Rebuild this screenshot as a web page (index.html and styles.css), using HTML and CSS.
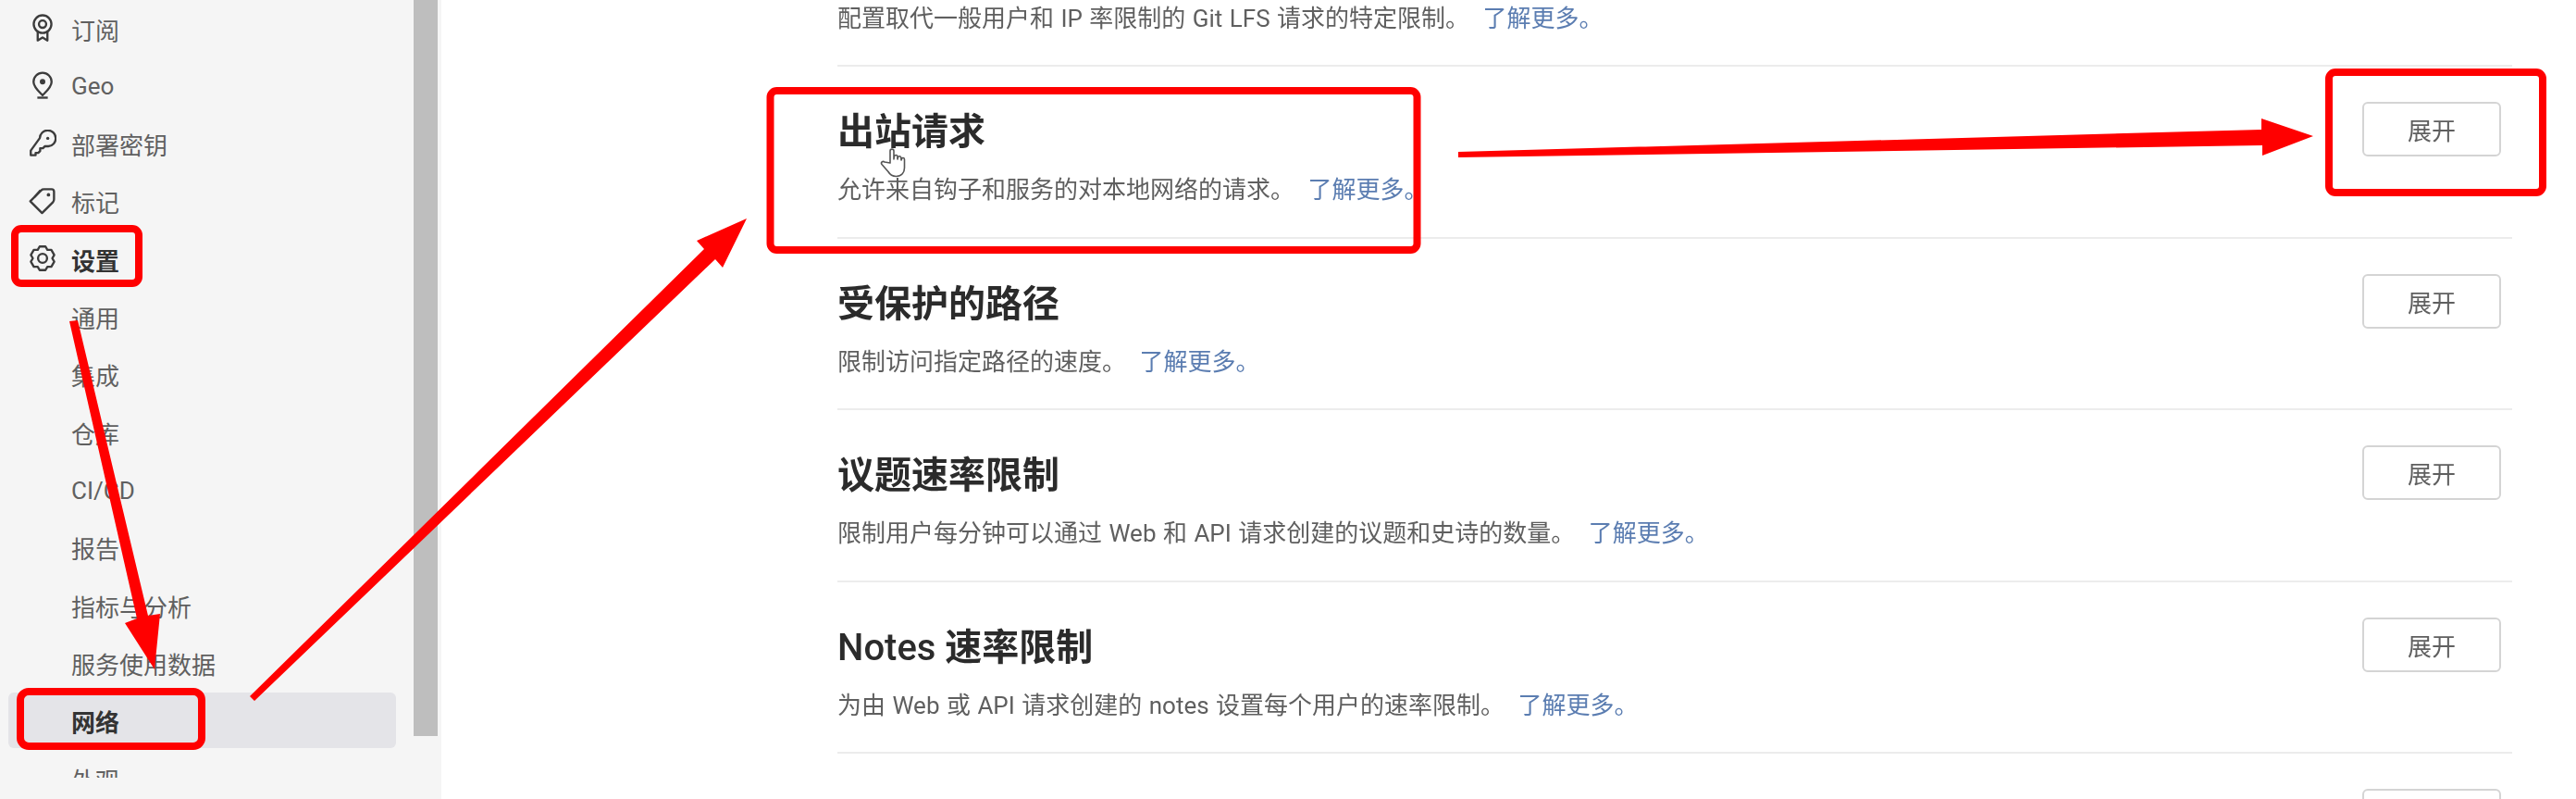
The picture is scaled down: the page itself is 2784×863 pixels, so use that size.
FILE: index.html
```html
<!DOCTYPE html>
<html lang="zh-CN">
<head>
<meta charset="utf-8">
<title>网络设置</title>
<link rel="stylesheet" href="styles.css">
</head>
<body>
<div class="page">
  <aside class="sidebar">
    <nav class="nav">
      <a class="nav-item">
        <svg class="icon" viewBox="0 0 16 16"><circle cx="8" cy="5.9" r="5.1"/><circle cx="8" cy="5.9" r="2.1"/><path d="M5.2 10.4v4.9L8 13.6l2.8 1.7v-4.9"/></svg>
        <span>订阅</span>
      </a>
      <a class="nav-item">
        <svg class="icon" viewBox="0 0 16 16"><path d="M8 .9a5.2 5.2 0 0 1 5.2 5.2c0 2.900-2.900 5.400-5.200 7.700-2.300-2.300-5.200-4.800-5.200-7.700A5.200 5.200 0 0 1 8 .9z"/><circle class="dot" cx="8" cy="6" r="1.6"/><path d="M5 15.200h6"/></svg>
        <span>Geo</span>
      </a>
      <a class="nav-item">
        <svg class="icon" viewBox="0 0 16 16"><path d="M6.400 4.900a4.600 4.600 0 1 1 4.900 4.700L9.400 9.500 8.200 10.700H6.600v1.600L5.500 13.400H4v1.300H1.200v-2.600z"/><circle class="dot" cx="11" cy="5" r=".9"/></svg>
        <span>部署密钥</span>
      </a>
      <a class="nav-item">
        <svg class="icon" viewBox="0 0 16 16"><path d="M.9 8.200 7.200 1.900c.5-.5 1-.6 1.600-.6h4.400c.8 0 1.400.6 1.400 1.400v4.400c0 .6-.2 1.200-.6 1.600L7.700 15z"/><path d="M3.400 5.700 6.800 1.900"/><circle class="dot" cx="11.400" cy="4.500" r="1"/></svg>
        <span>标记</span>
      </a>
      <a class="nav-item nav-strong">
        <svg class="icon" viewBox="0 0 16 16"><path d="M6.310 1.210H9.690L10.800 3.150 13.040 3.140 14.730 6.070 13.600 8 14.730 9.930 13.040 12.860 10.800 12.850 9.690 14.790H6.310L5.200 12.850 2.960 12.860 1.270 9.930 2.400 8 1.270 6.070 2.960 3.140 5.200 3.150z"/><circle cx="8" cy="8" r="2.600"/></svg>
        <span>设置</span>
      </a>
      <a class="nav-item nav-sub">通用</a>
      <a class="nav-item nav-sub">集成</a>
      <a class="nav-item nav-sub">仓库</a>
      <a class="nav-item nav-sub">CI/CD</a>
      <a class="nav-item nav-sub">报告</a>
      <a class="nav-item nav-sub">指标与分析</a>
      <a class="nav-item nav-sub">服务使用数据</a>
      <a class="nav-item nav-sub nav-strong nav-active">网络</a>
      <a class="nav-item nav-sub">外观</a>
    </nav>
    <div class="scrollbar"></div>
  </aside>

  <main class="content">
    <section class="row row-cut">
      <div class="row-text">
        <p class="desc">配置取代一般用户和 IP 率限制的 Git LFS 请求的特定限制。 <a class="more">了解更多。</a></p>
      </div>
    </section>
    <section class="row">
      <div class="row-text">
        <h2 class="title">出站请求</h2>
        <p class="desc">允许来自钩子和服务的对本地网络的请求。 <a class="more">了解更多。</a></p>
      </div>
      <button class="expand">展开</button>
    </section>
    <section class="row">
      <div class="row-text">
        <h2 class="title">受保护的路径</h2>
        <p class="desc">限制访问指定路径的速度。 <a class="more">了解更多。</a></p>
      </div>
      <button class="expand">展开</button>
    </section>
    <section class="row">
      <div class="row-text">
        <h2 class="title">议题速率限制</h2>
        <p class="desc">限制用户每分钟可以通过 Web 和 API 请求创建的议题和史诗的数量。 <a class="more">了解更多。</a></p>
      </div>
      <button class="expand">展开</button>
    </section>
    <section class="row">
      <div class="row-text">
        <h2 class="title"><span class="latin">Notes</span> 速率限制</h2>
        <p class="desc">为由 Web 或 API 请求创建的 notes 设置每个用户的速率限制。 <a class="more">了解更多。</a></p>
      </div>
      <button class="expand">展开</button>
    </section>
    <section class="row">
      <div class="row-text"></div>
      <button class="expand">展开</button>
    </section>
  </main>
</div>

<svg class="marks" viewBox="0 0 2784 863" aria-hidden="true">
  <rect class="box" x="16" y="247" width="134" height="59" rx="7"/>
  <rect class="box" x="22" y="747" width="196" height="59" rx="9"/>
  <rect class="box" x="832.500" y="98" width="699" height="172" rx="7"/>
  <rect class="box" x="2517" y="78" width="231" height="130" rx="7"/>
  <polygon class="arrow" points="75,347 84,346 160,665 173,663 167,723 135,673 148,668"/>
  <polygon class="arrow" points="807,236 781,289 773,280 275,757 270,752 761,269 753,260"/>
  <polygon class="arrow" points="1576,164 2444,140 2444,128 2500,147 2445,168 2445,157 1576,170"/>
  <path class="hand" d="M962 176V163c0-2.500 4-2.500 4 0v9l.4-3c.4-2 3.400-2 3.500 0l.1 3 .4-2c.5-1.800 3.300-1.500 3.400.4l.2 2.600.5-1.500c.6-1.500 3-1.200 3 .8v9c0 5-3 9.200-9 9.200-4 0-6.500-1.500-8.500-5l-7-8c-1.500-2 1-4 3-2.500z"/>
</svg>
</body>
</html>
```
FILE: styles.css
```css
* { box-sizing: border-box; }

html, body {
  margin: 0;
  padding: 0;
  height: 863px;
  overflow: hidden;
  background: #fff;
}

body {
  position: relative;
  font-family: Roboto, "Noto Sans CJK SC", sans-serif;
  color: #666;
}

.page {
  display: flex;
  height: 863px;
  overflow: hidden;
  filter: blur(0.55px);
}

/* sidebar */
.sidebar {
  flex: 0 0 477px;
  display: flex;
  align-items: flex-start;
  gap: 19px;
  height: 863px;
  padding-left: 9px;
  background: #f5f5f5;
}

.nav {
  flex: 0 0 419px;
  height: 840px;
  overflow: hidden;
}

.nav-item {
  display: flex;
  align-items: center;
  gap: 16px;
  height: 60px;
  margin-bottom: 2.33px;
  padding: 2px 0 0 22px;
  border-radius: 6px;
  font-size: 26px;
  color: #606060;
}

.nav-sub { padding-left: 68px; }

.nav-strong {
  font-weight: 700;
  color: #333;
}

.nav-active { background: #e4e4e8; }

.icon {
  flex: 0 0 30px;
  width: 30px;
  height: 30px;
  fill: none;
  stroke: #3c3c3c;
  stroke-width: 1.25;
  stroke-linejoin: round;
  margin-top: -2px;
}

.icon .dot {
  fill: #3c3c3c;
  stroke: none;
}

.scrollbar {
  flex: 0 0 26px;
  height: 795px;
  background: #bebebe;
}

/* settings list */
.content {
  flex: 1;
  min-width: 0;
  height: 863px;
  overflow: hidden;
  padding: 0 69px 0 428px;
}

.row {
  display: flex;
  justify-content: space-between;
  align-items: flex-start;
  padding: 38px 12px 31.5px 0;
  border-bottom: 2px solid #ececec;
}

.row-cut { padding: 1px 0 31px; }

.title {
  margin: 5px 0 15px;
  font-size: 40px;
  line-height: 56px;
  font-weight: 700;
  color: #2b2b2b;
}

.latin { font-weight: 500; }

.desc {
  margin: 0;
  font-size: 26px;
  line-height: 38px;
  word-spacing: 1px;
  color: #5f5f5f;
}

.more {
  margin-left: 7px;
  color: #5b7db1;
}

.expand {
  flex: 0 0 150px;
  height: 59px;
  padding: 0;
  border: 2px solid #d4d4d4;
  border-radius: 6px;
  background: #fff;
  font: inherit;
  font-size: 26px;
  color: #5f5f5f;
}

/* annotation layer over the screenshot */
.marks {
  position: absolute;
  left: 0;
  top: 0;
  width: 2784px;
  height: 863px;
  pointer-events: none;
}

.box {
  fill: none;
  stroke: #ff0000;
  stroke-width: 8;
}

.arrow { fill: #ff0000; }

.hand {
  fill: #fff;
  fill-opacity: 0.85;
  stroke: #555;
  stroke-width: 1.6;
  stroke-linejoin: round;
}
```
